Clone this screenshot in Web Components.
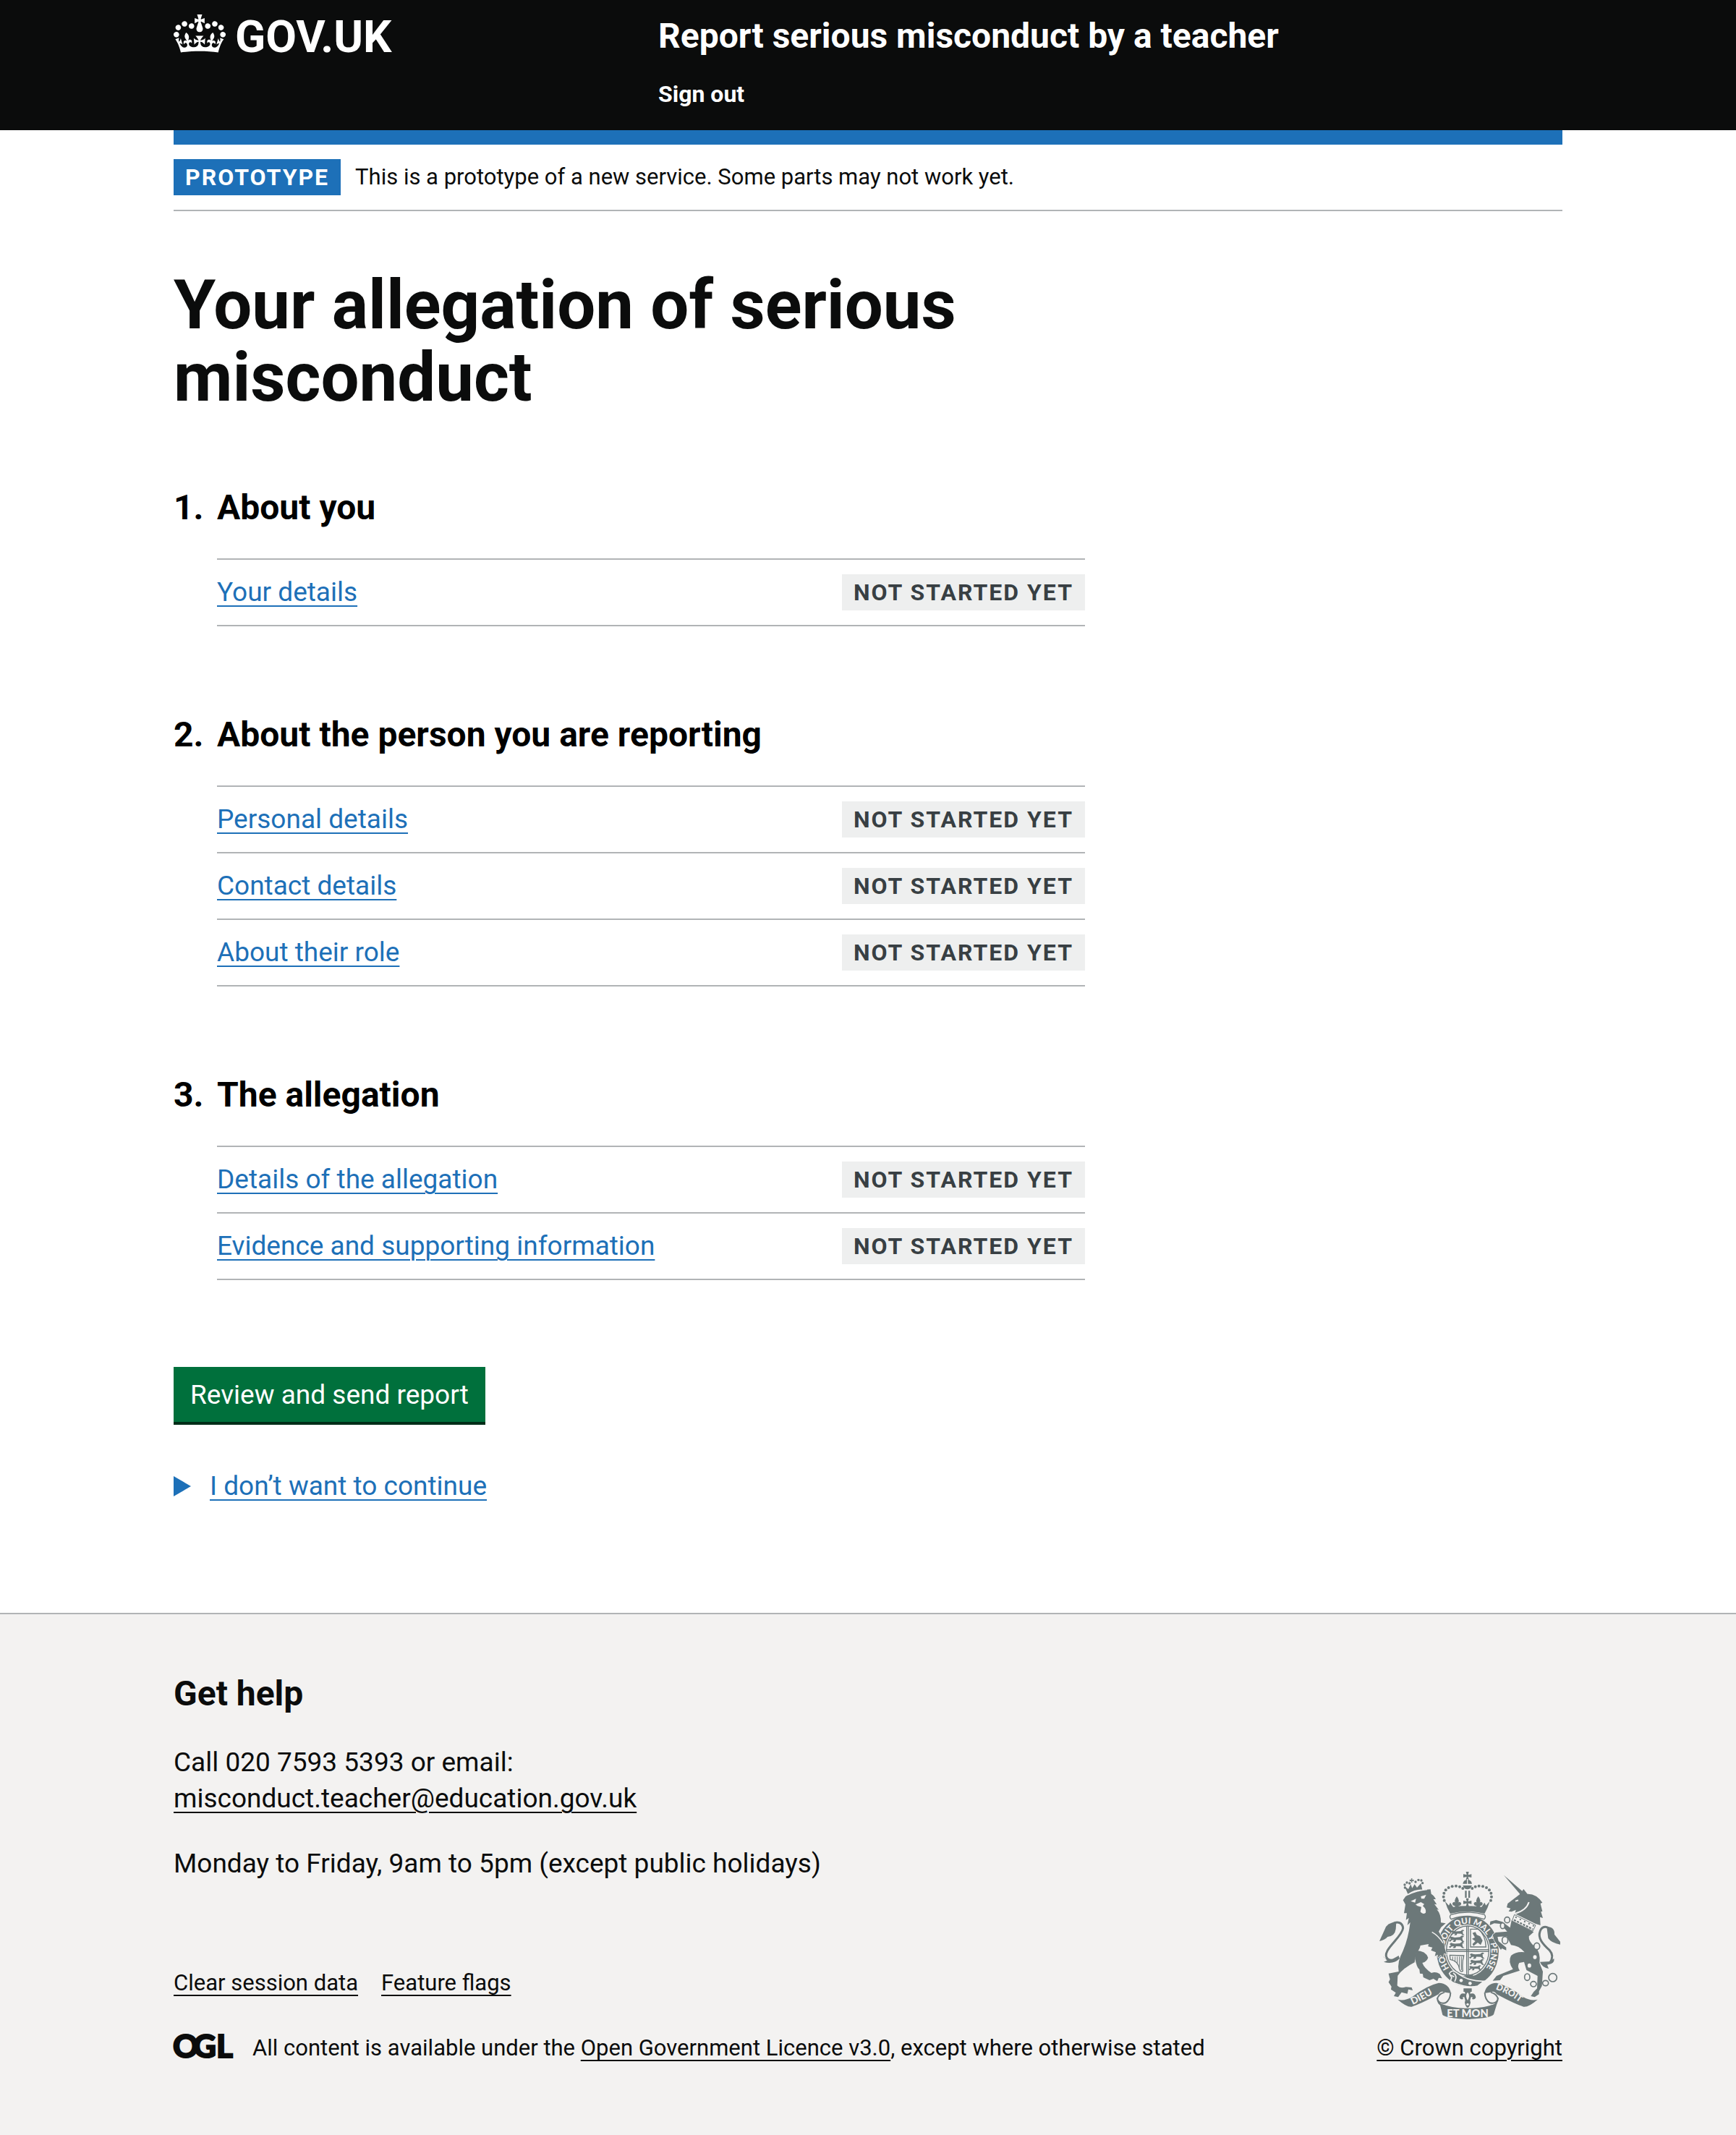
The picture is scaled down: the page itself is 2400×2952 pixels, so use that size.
<!DOCTYPE html>
<html lang="en">
<head>
<meta charset="utf-8">
<meta name="viewport" content="width=device-width, initial-scale=1">
<title>Your allegation of serious misconduct - GOV.UK</title>
<style>
  body {
    margin: 0;
    background: #fff;
    color: #0b0c0c;
    font-family: Roboto, "Liberation Sans", sans-serif;
    font-size: 37px;
    line-height: 50px;
    --page-width: 1920px;
    --blue: #1d70b8;
    --rule: #b1b4b6;
  }
</style>
</head>
<body>
<service-header service="Report serious misconduct by a teacher">
  <nav-link slot="nav" href="#sign-out">Sign out</nav-link>
</service-header>
<phase-banner phase="Prototype">This is a prototype of a new service. Some parts may not work yet.</phase-banner>
<page-main>
  <page-title>Your allegation of serious misconduct</page-title>
  <task-section number="1." heading="About you">
    <task-item href="#your-details" status="Not started yet">Your details</task-item>
  </task-section>
  <task-section number="2." heading="About the person you are reporting">
    <task-item href="#personal-details" status="Not started yet">Personal details</task-item>
    <task-item href="#contact-details" status="Not started yet">Contact details</task-item>
    <task-item href="#their-role" status="Not started yet">About their role</task-item>
  </task-section>
  <task-section number="3." heading="The allegation">
    <task-item href="#allegation" status="Not started yet">Details of the allegation</task-item>
    <task-item href="#evidence" status="Not started yet">Evidence and supporting information</task-item>
  </task-section>
  <action-button>Review and send report</action-button>
  <reveal-details summary="I don’t want to continue"></reveal-details>
</page-main>
<service-footer></service-footer>

<template id="service-header">
  <style>
    :host { display: block; background: #0b0c0c; color: #fff; padding: 20px 40px 30px; }
    .inner { display: flex; gap: 30px; max-width: var(--page-width); margin: 0 auto; }
    .logo { flex: 0 0 33.333%; }
    .logo a { display: inline-flex; gap: 13px; color: inherit; text-decoration: none; font-size: 62px; font-weight: 700; line-height: 62px; }
    .crown { display: block; width: 72px; height: 53px; }
    .title { display: block; margin-bottom: 30px; color: inherit; text-decoration: none; font-size: 48px; font-weight: 700; line-height: 60px; }
  </style>
  <div class="inner">
    <div class="logo"><a href="#home"><svg class="crown" viewBox="0 0 132 97" aria-hidden="true"><path fill="currentColor" fill-rule="evenodd" d="M25 30.2c3.5 1.5 7.7-.2 9.1-3.7 1.5-3.6-.2-7.8-3.9-9.2-3.6-1.4-7.6.3-9.1 3.9-1.4 3.5.3 7.5 3.9 9zM9 39.5c3.6 1.5 7.8-.2 9.2-3.7 1.5-3.6-.2-7.8-3.9-9.1-3.6-1.5-7.6.2-9.1 3.8-1.4 3.5.3 7.5 3.8 9zM4.4 57.2c3.5 1.5 7.7-.2 9.1-3.8 1.5-3.6-.2-7.7-3.9-9.1-3.5-1.5-7.6.3-9.1 3.8-1.4 3.5.3 7.6 3.9 9.1zm38.3-21.4c3.5 1.5 7.7-.2 9.1-3.8 1.5-3.6-.2-7.7-3.9-9.1-3.6-1.5-7.6.3-9.1 3.8-1.3 3.6.4 7.7 3.9 9.1zm64.4-5.6c-3.6 1.5-7.8-.2-9.1-3.7-1.5-3.6.2-7.8 3.8-9.2 3.6-1.4 7.7.3 9.2 3.9 1.3 3.5-.4 7.5-3.9 9zm15.9 9.3c-3.6 1.5-7.7-.2-9.1-3.7-1.5-3.6.2-7.8 3.7-9.1 3.6-1.5 7.7.2 9.2 3.8 1.5 3.5-.3 7.5-3.8 9zm4.7 17.7c-3.6 1.5-7.8-.2-9.2-3.8-1.5-3.6.2-7.7 3.9-9.1 3.6-1.5 7.7.3 9.2 3.8 1.3 3.5-.4 7.6-3.9 9.1zM89.3 35.8c-3.6 1.5-7.8-.2-9.2-3.8-1.4-3.6.2-7.7 3.9-9.1 3.6-1.5 7.7.3 9.2 3.8 1.4 3.6-.3 7.7-3.9 9.1zM69.7 17.7l8.9 4.7V9.3l-8.9 2.8c-.2-.3-.5-.6-.9-.9L72.4 0H59.6l3.5 11.2c-.3.3-.6.5-.9.9l-8.8-2.8v13.1l8.8-4.7c.3.3.6.7.9.9l-5 15.4v.1c-.2.8-.4 1.6-.4 2.4 0 4.1 3.1 7.5 7 8.1h.2c.3 0 .7.1 1 .1.4 0 .7 0 1-.1h.2c4-.6 7.1-4.1 7.1-8.1 0-.8-.1-1.7-.4-2.4V34l-5.1-15.4c.4-.2.7-.6 1-.9zM66 92.8c16.9 0 32.8 1.1 47.1 3.2 4-16.9 8.9-26.7 14-33.5l-9.6-3.4c1 4.9 1.1 7.2 0 10.2-1.5-1.4-3-4.3-4.2-8.7L108.6 76c2.8-2 5-3.2 7.5-3.3-4.4 9.4-10 11.9-13.6 11.2-4.3-.8-6.3-4.6-5.6-7.9 1-4.7 5.7-5.9 8-.5 4.3-8.7-3-11.4-7.6-8.8 7.1-7.2 7.9-13.5 2.1-21.1-8 6.1-8.1 12.3-4.5 20.8-4.7-5.4-12.1-2.5-9.5 6.2 3.4-5.2 7.9-2 7.2 3.1-.6 4.3-6.4 7.8-13.5 7.2-10.3-.9-10.9-8-11.2-13.8 2.5-.5 7.1 1.8 11 7.3L80.2 60c-4.1 4.4-8 5.3-12.3 5.4 1.4-4.4 8-11.6 8-11.6H55.5s6.4 7.2 7.9 11.6c-4.2-.1-8-1-12.3-5.4l1.4 16.4c3.9-5.5 8.5-7.7 10.9-7.3-.3 5.8-.9 12.8-11.1 13.8-7.2.6-12.9-2.9-13.5-7.2-.7-5 3.8-8.3 7.1-3.1 2.7-8.7-4.6-11.6-9.4-6.2 3.7-8.5 3.6-14.7-4.6-20.8-5.8 7.6-5 13.9 2.2 21.1-4.7-2.6-11.9.1-7.7 8.8 2.3-5.5 7.1-4.2 8.1.5.7 3.3-1.3 7.1-5.7 7.9-3.5.7-9-1.8-13.5-11.2 2.5.1 4.7 1.3 7.5 3.3l-4.7-15.4c-1.2 4.4-2.7 7.2-4.3 8.7-1.1-3-.9-5.3 0-10.2l-9.5 3.4c5 6.9 9.9 16.7 14 33.5 14.8-2.1 30.8-3.2 47.7-3.2z"/></svg><span>GOV.UK</span></a></div>
    <div>
      <a class="title" href="#service"></a>
      <nav aria-label="Menu"><slot name="nav"></slot></nav>
    </div>
  </div>
</template>

<template id="nav-link">
  <style>
    :host { display: block; font-size: 32px; font-weight: 700; line-height: 40px; }
    a { color: inherit; text-decoration: none; }
  </style>
  <a><slot></slot></a>
</template>

<template id="phase-banner">
  <style>
    :host { display: block; padding: 0 40px; font-size: 31px; line-height: 40px; }
    .inner { max-width: var(--page-width); margin: 0 auto; border-top: 20px solid var(--blue); border-bottom: 2px solid var(--rule); }
    p { display: flex; align-items: center; gap: 20px; margin: 0; padding: 20px 0; }
  </style>
  <div class="inner"><p><status-tag tone="blue"></status-tag><span><slot></slot></span></p></div>
</template>

<template id="status-tag">
  <style>
    :host { display: inline-block; box-sizing: border-box; padding: 5px 16px; background: #eeefef; color: #383f43; font-size: 32px; font-weight: 700; line-height: 40px; letter-spacing: 2px; text-transform: uppercase; white-space: nowrap; }
    :host([tone="blue"]) { background: var(--blue); color: #fff; }
  </style>
  <slot></slot>
</template>

<template id="page-main">
  <style>
    :host { display: block; padding: 80px 40px 150px; }
    .inner { max-width: var(--page-width); margin: 0 auto; }
    main { width: calc(66.666% - 20px); }
  </style>
  <div class="inner"><main><slot></slot></main></div>
</template>

<template id="page-title">
  <style>
    :host { display: block; margin-bottom: 100px; }
    h1 { margin: 0; font-size: 94px; font-weight: 700; line-height: 100px; }
  </style>
  <h1><slot></slot></h1>
</template>

<template id="task-section">
  <style>
    :host { display: block; margin-bottom: 120px; }
    h2 { display: flex; margin: 0 0 40px; color: #000; font-size: 48px; font-weight: 700; line-height: 60px; }
    .number { flex: 0 0 60px; }
    .list { margin-left: 60px; border-top: 2px solid var(--rule); }
  </style>
  <section><h2><span class="number"></span><span class="heading"></span></h2><div class="list" role="list"><slot></slot></div></section>
</template>

<template id="task-item">
  <style>
    :host { display: flex; justify-content: space-between; align-items: center; padding: 20px 0; border-bottom: 2px solid var(--rule); }
    a { color: var(--blue); text-decoration-thickness: 2px; text-underline-offset: 6px; }
  </style>
  <a><slot></slot></a><status-tag></status-tag>
</template>

<template id="action-button">
  <style>
    :host { display: block; margin-bottom: 64px; }
    button { display: block; margin: 0; padding: 14px 23px 12px; border: 0; background: #00703c; box-shadow: 0 4px 0 #002d18; color: #fff; font: inherit; cursor: pointer; }
  </style>
  <button type="button"><slot></slot></button>
</template>

<template id="reveal-details">
  <style>
    :host { display: block; color: var(--blue); }
    summary { display: flex; align-items: center; gap: 26px; width: fit-content; cursor: pointer; }
    summary::before { content: ""; border: solid transparent; border-width: 14px 0 14px 24px; border-left-color: currentColor; }
    span { text-decoration: underline 2px; text-underline-offset: 6px; }
  </style>
  <details><summary><span></span></summary><slot></slot></details>
</template>

<template id="service-footer">
  <style>
    :host { display: block; padding: 80px 40px 100px; border-top: 2px solid var(--rule); background: #f3f2f1; }
    footer { max-width: var(--page-width); margin: 0 auto; }
    a { color: inherit; text-decoration-thickness: 2px; text-underline-offset: 6px; }
    .row { display: flex; justify-content: space-between; align-items: flex-end; }
    h2 { margin: 0 0 40px; font-size: 48px; line-height: 60px; }
    p { margin: 0 0 40px; }
    .hours { margin-bottom: 120px; }
    .small { font-size: 31px; line-height: 40px; }
    ul { display: flex; gap: 32px; margin: 0 0 50px; padding: 0; list-style: none; }
    .licence { display: flex; align-items: center; gap: 27px; }
    .copyright { display: flex; flex-direction: column; align-items: center; gap: 20px; color: inherit; text-align: center; }
  </style>
  <footer>
    <div class="row">
      <div>
        <h2>Get help</h2>
        <p>Call 020 7593 5393 or email:<br><a href="mailto:misconduct.teacher@education.gov.uk">misconduct.teacher@education.gov.uk</a></p>
        <p class="hours">Monday to Friday, 9am to 5pm (except public holidays)</p>
        <ul class="small"><li><a href="#clear">Clear session data</a></li><li><a href="#flags">Feature flags</a></li></ul>
        <div class="licence small"><ogl-logo></ogl-logo><span>All content is available under the <a href="#licence">Open Government Licence v3.0</a>, except where otherwise stated</span></div>
      </div>
      <a class="copyright small" href="#copyright"><royal-crest></royal-crest><span>© Crown copyright</span></a>
    </div>
  </footer>
</template>

<template id="ogl-logo">
  <style>
    :host { display: block; flex: none; }
    svg { display: block; width: 82px; height: 40px; overflow: visible; }
    text { font: 900 44px Lato, sans-serif; fill: #0b0c0c; stroke: #0b0c0c; stroke-width: 2; }
  </style>
  <svg viewBox="0 0 82 40" role="img" aria-label="OGL"><text x="-1 27 59" y="33">OGL</text></svg>
</template>

<template id="royal-crest">
  <style>
    :host { display: block; }
    svg { display: block; width: 250px; height: 204px; --ink: #6c7879; --paper: #f3f2f1; }
    .i { fill: var(--ink); } .p { fill: var(--paper); }
    .il { fill: none; stroke: var(--ink); } .pl { fill: none; stroke: var(--paper); }
    .edge { stroke: var(--paper); stroke-width: 4; paint-order: stroke; }
    text { fill: var(--paper); font: 900 36px Lato, sans-serif; }
  </style>
  <svg viewBox="72 84 750 612" aria-hidden="true">
    <defs>
      <path id="cross" d="M-6-17H6L3-4 17-7V7L3 4 6 17H-6L-3 4-17 7V-7L-3-4Z"/>
      <path id="fleur" d="M0-24Q14-6 4 6 10-6 18 4 20 14 8 16L6 24H-6L-8 16Q-20 14-18 4-10-6-4 6-14-6 0-24Z"/>
      <path id="beast" d="M-34-6Q-30-16-20-10L-10-8 14-10Q24-22 32-12L24-8 26 4 34 12 24 12 16 4-4 3-8 12-20 12-14 4-24 4-32 12-38 6-28 0Z"/>
      <g id="scroll">
        <path class="i" d="M148 614Q176 622 208 603 268 556 318 545 360 546 369 588L344 584Q326 576 318 592 240 634 206 644 184 646 148 614Z"/>
        <path class="il" stroke-width="6" d="M367 586Q366 616 346 628 322 634 313 614 312 594 342 584M312 606Q314 640 346 642"/>
      </g>
      <path id="garterpath" d="M362 484A98 113 0 1 1 476 517"/>
      <path id="dieu" d="M210 636Q262 612 322 574"/>
      <path id="droit" d="M553 572Q604 586 668 636"/>
    </defs>

    <!-- garter -->
    <ellipse cx="438" cy="413" rx="134" ry="152" class="p"/>
    <ellipse cx="438" cy="413" rx="129" ry="147" class="i"/>
    <ellipse cx="438" cy="411" rx="94" ry="108" class="p"/>
    <ellipse cx="438" cy="411" rx="88" ry="102" class="il" stroke-width="4"/>
    <text style="font-size:35px"><textPath href="#garterpath">HONI SOIT QUI MAL Y PENSE</textPath></text>
    <path class="il" stroke-width="4" d="M350 407H526M350 414H526M434 309V513M441 309V513"/>
    <g class="i">
      <use href="#beast" transform="translate(398 338) scale(.8)"/><use href="#beast" transform="translate(394 364) scale(.9)"/><use href="#beast" transform="translate(394 390) scale(.9)"/>
      <use href="#beast" transform="translate(478 434) scale(.9)"/><use href="#beast" transform="translate(478 460) scale(.85)"/><use href="#beast" transform="translate(470 484) scale(.75)"/>
      <path d="M458 338 470 334 476 346 490 352 500 370 492 388 480 378 462 392 458 384 470 372 456 362 468 356Z"/>
    </g>
    <path class="il" stroke-width="4" d="M450 322H482Q512 346 514 396H450ZM364 430 422 432Q414 460 418 496Q408 502 404 488Q400 454 366 448Z"/>
    <path class="il" stroke-width="3" d="M376 436V450M386 436V458M395 436V466M404 436V482M412 436V492"/>
    <!-- buckle -->
    <path d="M362 506Q372 488 392 502 440 540 506 538L480 558Q440 568 384 546 360 540 372 524Z" fill="var(--ink)" stroke="var(--paper)" stroke-width="5"/>
    <circle cx="411" cy="535" r="7" class="p"/><circle cx="448" cy="547" r="7" class="p"/>
    <path class="pl" stroke-width="5" d="M378 504Q398 516 384 540M366 512 382 520"/>
    <path class="i" d="M422 512Q438 516 462 510L456 526 436 522Z"/>

    <!-- lion -->
    <g transform="translate(60 60)">
      <g class="i">
        <path class="edge" d="M121 126Q165 98 224 97L227 116Q238 122 246 138L236 138 250 160 240 158 258 182 250 180Q268 200 267 235L287 238 268 254 258 272Q278 300 284 344L290 366 280 362 276 380 266 370 256 380 254 368 242 374 246 358 226 350 232 338 214 334 216 324 182 330Q180 345 164 364L158 400Q110 424 88 455L86 496Q98 510 122 502L146 504 150 516 132 512 128 530 104 524 90 544 72 540 80 526 60 512 62 500 50 482 56 470 50 446 92 438Q84 400 110 352 132 300 140 234L128 246 134 216 122 224 126 196 114 196 120 160 110 142Z"/>
        <path d="M164 350Q204 352 214 380 210 396 190 402 198 424 228 444 244 436 262 448L272 466 258 464 252 478 236 468 220 474 194 462 192 448 180 446 178 430Q166 420 160 384Z"/>
        <path d="M82 234Q44 232 34 264L12 312Q34 308 46 294 76 292 80 262Z"/>
        <path d="M28 374Q34 390 66 386L92 372 96 384Q70 410 30 398L44 392Z"/>
        <path d="M130 116 116 84 132 96 142 76 148 92 158 76 168 90 184 72 186 80 190 98Q160 96 130 116Z"/>
        <use href="#cross" transform="translate(146 60) scale(.5)"/>
        <circle cx="118" cy="90" r="5"/><circle cx="117" cy="78" r="5"/><circle cx="126" cy="69" r="5"/><circle cx="137" cy="72" r="5"/><circle cx="162" cy="66" r="5"/><circle cx="174" cy="58" r="5"/><circle cx="186" cy="60" r="5"/><circle cx="191" cy="71" r="5"/>
      </g>
      <path class="il" stroke-width="9" d="M92 380C54 404 28 384 46 350 62 322 108 284 110 258 108 234 86 228 66 240"/>
      <path class="pl" stroke-width="4" d="M130 120Q165 102 210 98M230 274Q258 290 276 320"/>
      <path class="p" d="M142 146 164 136 160 152ZM184 126 206 120 198 136 186 136ZM162 160 184 150 198 158 192 166Q208 180 204 194 192 204 182 190L186 170 170 166Z"/>
    </g>

    <!-- unicorn -->
    <g transform="translate(450 60)">
      <g class="i">
        <path d="M138 38 216 106 206 118Z"/>
        <path d="M204 118 220 96 236 116Q272 114 298 152L290 156 298 188 292 190 300 216 288 212 290 246 270 240 184 198 188 182 170 190 158 188 166 176 150 172 154 156Z"/>
        <path class="edge" d="M170 226 262 274 242 292Q240 314 266 334 292 358 286 402L300 438 296 498 284 520 284 532 266 544 250 540 262 522 276 508 278 456 232 432 222 398 202 402Q192 416 204 434L136 456 122 474 92 476 108 456 176 428Q154 398 168 372 190 354 224 358 200 330 168 328L150 292 112 294 116 312 148 338 148 350 130 342 126 348 112 328 98 308 92 286 104 276 152 272 134 252 122 240 98 238 80 246 82 230 106 224 132 232 164 256Z"/>
        <path d="M316 252Q350 252 348 284L372 314V326Q336 320 322 300Z"/>
        <path d="M288 398 330 396 346 384Q350 400 334 406L318 410 324 426Q296 420 288 398Z"/>
      </g>
      <path class="il" stroke-width="9" d="M330 400Q348 372 328 350C300 324 278 300 288 272 296 246 322 248 330 268"/>
      <path class="pl" stroke-width="6" d="M184 198Q232 184 242 150M186 146 198 142"/>
      <path d="M182 202 270 246 258 270 172 228Z" fill="var(--paper)" stroke="var(--ink)" stroke-width="3"/>
      <path class="il" stroke-width="7" stroke-dasharray="9 5" d="M180 224 258 262"/>
      <path class="il" stroke-width="6" stroke-dasharray="6 14" d="M186 212 264 250"/>
      <g fill="var(--paper)" stroke="var(--ink)" stroke-width="5">
        <ellipse cx="152" cy="224" rx="11" ry="12"/><ellipse cx="133" cy="248" rx="9" ry="12"/><ellipse cx="143" cy="308" rx="12" ry="15"/><ellipse cx="275" cy="333" rx="12" ry="14"/><ellipse cx="267" cy="378" rx="10" ry="11"/><ellipse cx="244" cy="413" rx="10" ry="11"/><ellipse cx="235" cy="461" rx="11" ry="14"/><ellipse cx="261" cy="490" rx="12" ry="11"/><ellipse cx="311" cy="486" rx="12" ry="11"/>
        <circle cx="341" cy="463" r="17" fill="none"/>
      </g>
    </g>

    <!-- crown -->
    <g class="i">
      <use href="#cross" x="437" y="101"/>
      <path d="M418 134Q420 118 437 116 454 118 456 134ZM418 141H456Q450 157 437 157 424 157 418 141Z"/>
      <path d="M427 163H434V192H427ZM441 163H448V192H441Z"/>
      <path d="M344 206 360 224 366 212 378 230Q437 222 496 230L508 212 514 224 530 206Q522 234 508 258 437 240 366 258 352 234 344 206Z"/>
      <use href="#cross" x="437" y="211"/>
      <use href="#fleur" x="393" y="210"/><use href="#fleur" x="482" y="210"/>
      <g id="pearls"><circle cx="418" cy="153" r="6"/><circle cx="405" cy="146" r="6"/><circle cx="390" cy="143" r="6"/><circle cx="374" cy="145" r="6"/><circle cx="359" cy="150" r="6"/><circle cx="347" cy="160" r="6"/><circle cx="340" cy="173" r="6"/><circle cx="338" cy="188" r="6"/><circle cx="341" cy="203" r="6"/></g>
      <use href="#pearls" transform="translate(875 0) scale(-1 1)"/>
    </g>
    <path class="pl" stroke-width="4" d="M437 114V136"/>
    <path d="M368 262Q437 242 508 262 516 272 506 281 437 256 370 281 360 272 368 262Z" fill="var(--paper)" stroke="var(--ink)" stroke-width="4"/>

    <!-- motto -->
    <use href="#scroll"/><use href="#scroll" transform="translate(876 0) scale(-1 1)"/>
    <path class="i" d="M322 630Q380 652 438 650 500 652 560 630L546 676Q534 692 438 696 348 692 334 678Z"/>
    <text x="438" y="688" text-anchor="middle" style="font-size:44px">ET MON</text>
    <text style="font-size:40px"><textPath href="#dieu">DIEU</textPath></text>
    <text style="font-size:37px"><textPath href="#droit">DROIT</textPath></text>
    <path class="i" d="M421 568H455V582H450L448 590Q470 584 472 606 468 616 456 612 462 602 452 604L448 618 450 626Q446 646 438 648 430 646 426 626L428 618 424 604Q414 602 420 612 408 616 404 606 406 584 428 590L426 582H421Z"/>
    <path class="p" d="M438 584Q450 596 438 618 426 596 438 584Z"/><circle cx="438" cy="634" r="5" class="p"/>
  </svg>
</template>

<script>
  const setups = {
    "status-tag": null,
    "nav-link": (el, root) => { root.querySelector("a").href = el.getAttribute("href"); },
    "service-header": (el, root) => { root.querySelector(".title").textContent = el.getAttribute("service"); },
    "phase-banner": (el, root) => { root.querySelector("status-tag").textContent = el.getAttribute("phase"); },
    "page-main": null,
    "page-title": null,
    "task-section": (el, root) => {
      root.querySelector(".number").textContent = el.getAttribute("number");
      root.querySelector(".heading").textContent = el.getAttribute("heading");
    },
    "task-item": (el, root) => {
      el.setAttribute("role", "listitem");
      root.querySelector("a").href = el.getAttribute("href");
      root.querySelector("status-tag").textContent = el.getAttribute("status");
    },
    "action-button": null,
    "reveal-details": (el, root) => { root.querySelector("summary span").textContent = el.getAttribute("summary"); },
    "ogl-logo": null,
    "royal-crest": null,
    "service-footer": null
  };

  for (const [name, setup] of Object.entries(setups)) {
    customElements.define(name, class extends HTMLElement {
      connectedCallback() {
        if (this.shadowRoot) return;
        const root = this.attachShadow({ mode: "open" });
        root.append(document.getElementById(name).content.cloneNode(true));
        if (setup) setup(this, root);
      }
    });
  }
</script>
</body>
</html>
